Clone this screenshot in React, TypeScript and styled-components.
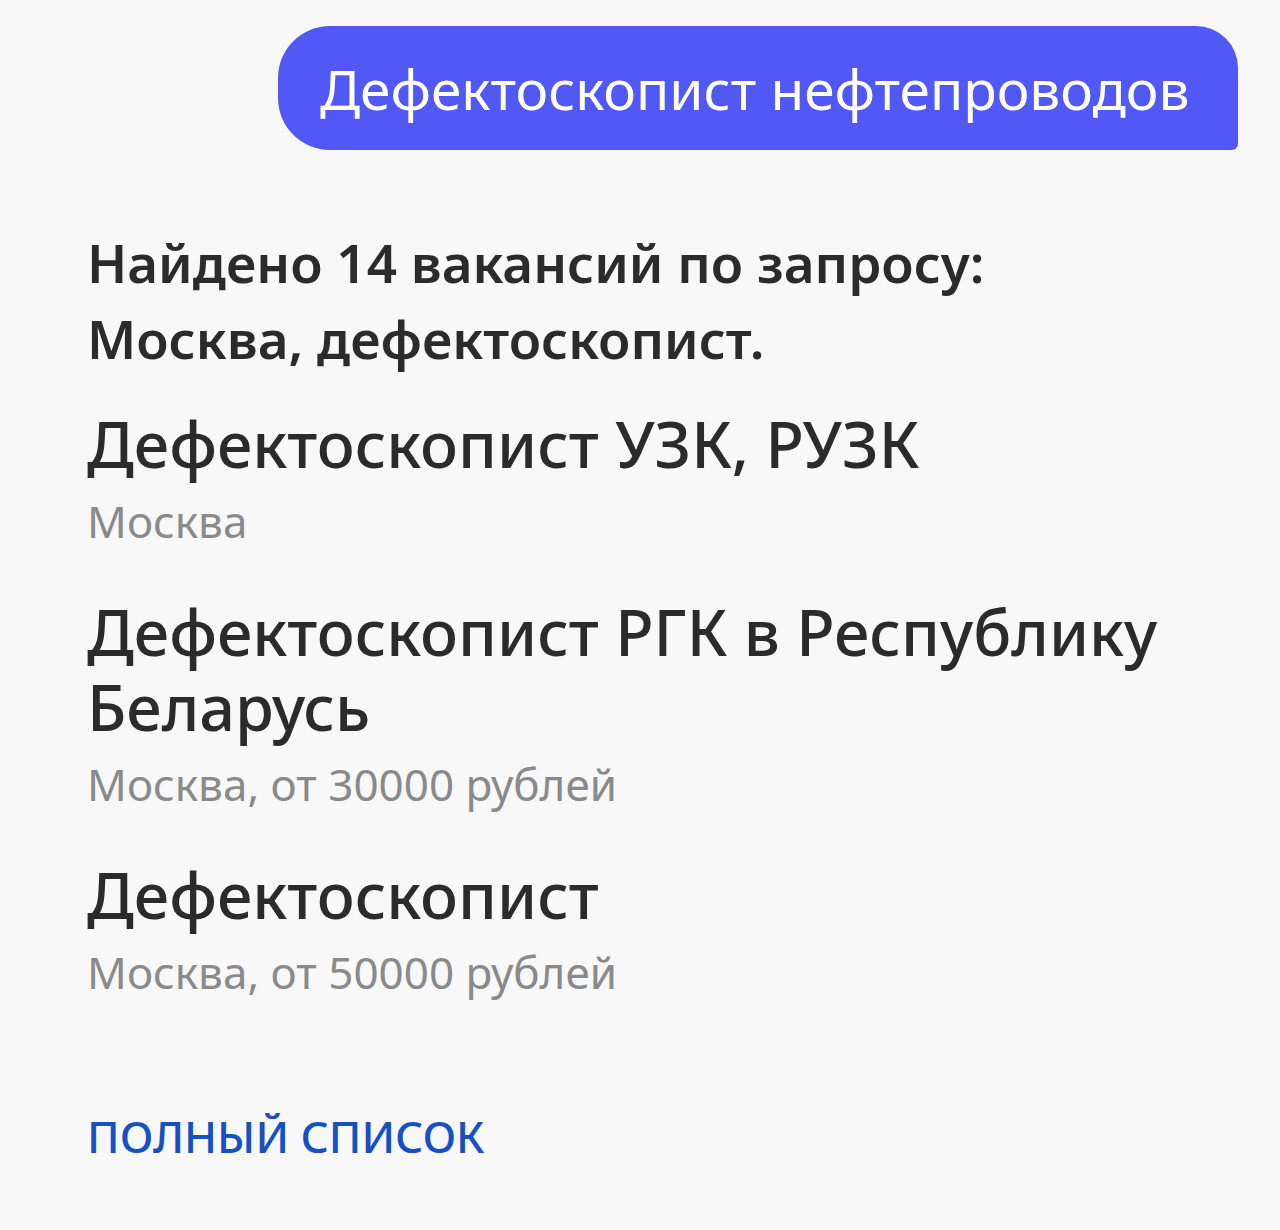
import styled, { createGlobalStyle } from 'styled-components';

const GlobalStyle = createGlobalStyle`
  html, body {
    margin: 0;
    padding: 0;
    background: #f8f8f8;
  }
  body {
    font-family: 'Noto Sans', 'Open Sans', sans-serif;
    color: #2b2b2b;
  }
`;

const Page = styled.div`
  display: flex;
  flex-direction: column;
  padding: 26px 42px 60px 87px;
`;

const Bubble = styled.div`
  align-self: flex-end;
  width: 960px;
  height: 124px;
  box-sizing: border-box;
  display: flex;
  align-items: center;
  padding: 0 42px;
  background: #5158f6;
  color: #fff;
  font-size: 55px;
  border-radius: 52px 42px 6px 52px;
`;

const Summary = styled.h2`
  margin: 75px 0 0;
  font-size: 53px;
  font-weight: 600;
  line-height: 76px;
  color: #2b2b2b;
`;

const List = styled.div`
  display: flex;
  flex-direction: column;
  gap: 45px;
  margin-top: 29px;
`;

const Item = styled.div`
  display: flex;
  flex-direction: column;
`;

const Title = styled.div`
  font-size: 63px;
  font-weight: 500;
  line-height: 75px;
  color: #2b2b2b;
`;

const Meta = styled.div`
  margin-top: 12px;
  font-size: 44px;
  line-height: 56px;
  color: #8a8a8a;
`;

const MoreLink = styled.a`
  margin-top: 106px;
  font-size: 44px;
  font-weight: 500;
  line-height: 60px;
  color: #1650c3;
  text-transform: uppercase;
  text-decoration: none;
`;

const vacancies = [
  { title: 'Дефектоскопист УЗК, РУЗК', meta: 'Москва' },
  { title: 'Дефектоскопист РГК в Республику Беларусь', meta: 'Москва, от 30000 рублей' },
  { title: 'Дефектоскопист', meta: 'Москва, от 50000 рублей' },
];

export default function App() {
  return (
    <>
      <GlobalStyle />
      <Page>
        <Bubble>Дефектоскопист нефтепроводов</Bubble>
        <Summary>
          Найдено 14 вакансий по запросу:
          <br />
          Москва, дефектоскопист.
        </Summary>
        <List>
          {vacancies.map((v) => (
            <Item key={v.title}>
              <Title>{v.title}</Title>
              <Meta>{v.meta}</Meta>
            </Item>
          ))}
        </List>
        <MoreLink href="#">Полный список</MoreLink>
      </Page>
    </>
  );
}
